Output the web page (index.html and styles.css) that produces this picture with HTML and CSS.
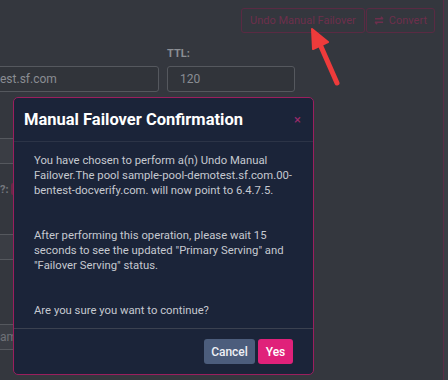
FILE: index.html
```html
<!DOCTYPE html>
<html lang="en">
<head>
    <meta charset="UTF-8">
    <meta name="viewport" content="width=device-width, initial-scale=1.0">
    <title>Manual Failover Confirmation</title>
    <link rel="stylesheet" href="styles.css">
</head>
<body>
    <div class="page">
        <div class="toolbar">
            <button class="btn-outline">Undo Manual Failover</button>
            <button class="btn-outline">
                <svg class="swap-icon" viewBox="0 0 12 10" width="11" height="9">
                    <path d="M1 3h9M7.5 0.8L10 3M1 7h9M3.5 9.2L1 7" fill="none" stroke="currentColor" stroke-width="1.6"/>
                </svg>
                Convert
            </button>
        </div>

        <div class="form-row">
            <div class="form-group name-group">
                <label>&nbsp;</label>
                <div class="field">est.sf.com</div>
            </div>
            <div class="form-group ttl-group">
                <label>TTL:</label>
                <div class="field">120</div>
                <small class="help">Time to live in seconds</small>
            </div>
        </div>

        <div class="back-rows">
            <div class="field wide"></div>
            <div class="back-label">?: <span class="pin"></span></div>
            <div class="field wide"></div>
            <div class="field wide spaced">am</div>
        </div>

        <!-- annotation arrow -->
        <svg class="arrow" width="40" height="60" viewBox="0 0 40 60">
            <path d="M32 55 L14 14" stroke="#ee3b3b" stroke-width="5" stroke-linecap="round"/>
            <path d="M7 1 L23 14 L8 21 Z" fill="#ee3b3b" stroke="#ee3b3b" stroke-width="2" stroke-linejoin="round"/>
        </svg>

        <div class="modal">
            <div class="modal-header">
                <h2>Manual Failover Confirmation</h2>
                <span class="close">&times;</span>
            </div>
            <div class="modal-body">
                <p>You have chosen to perform a(n) Undo Manual Failover.The pool sample-pool-demotest.sf.com.00-bentest-docverify.com. will now point to 6.4.7.5.</p>
                <p>After performing this operation, please wait 15 seconds to see the updated "Primary Serving" and "Failover Serving" status.</p>
                <p>Are you sure you want to continue?</p>
            </div>
            <div class="modal-footer">
                <button class="btn btn-cancel">Cancel</button>
                <button class="btn btn-yes">Yes</button>
            </div>
        </div>
    </div>
</body>
</html>
```

FILE: styles.css
```css
* {
    margin: 0;
    padding: 0;
    box-sizing: border-box;
    font-family: Roboto, 'Inter', "Noto Sans", sans-serif;
}

body {
    background-color: #393c43;
    width: 448px;
    height: 380px;
    overflow: hidden;
}

.page {
    position: relative;
    width: 444px;
    height: 380px;
    background-color: #34373e;
    border-right: 1px solid #5c2a44;
    overflow: hidden;
}

.toolbar {
    display: flex;
    justify-content: flex-end;
    gap: 1px;
    padding: 8px 8px 0 0;
}

.btn-outline {
    height: 25px;
    padding: 0 7px;
    background: transparent;
    border: 1px solid #5a2a43;
    border-radius: 3px;
    color: #6d2f4c;
    font-size: 11px;
    display: flex;
    align-items: center;
    gap: 4px;
}

.btn-outline:first-child {
    padding: 0 8px;
}

.swap-icon {
    display: block;
}

.form-row {
    display: grid;
    grid-template-columns: 172px 128px;
    gap: 8px;
    margin: 14px 0 0 -13px;
}

label {
    display: block;
    font-size: 11px;
    font-weight: 700;
    color: #8b8e94;
    height: 14px;
    margin-bottom: 5px;
}

.field {
    height: 26px;
    border: 1px solid #55585e;
    border-radius: 3px;
    background-color: #31343a;
    color: #8a8d93;
    font-size: 12px;
    line-height: 24px;
    padding: 0 8px 0 12px;
}

.name-group .field {
    text-align: right;
    padding-right: 124px;
}

.help {
    display: block;
    font-size: 10.5px;
    color: #55585e;
    margin-top: 3px;
}

.back-rows {
    display: flex;
    flex-direction: column;
    margin: 30px 0 0 -8px;
    width: 300px;
}

.back-rows .field {
    height: 26px;
    border-radius: 0;
    border-left: none;
    background-color: #3a3d44;
}

.back-label {
    height: 70px;
    padding-top: 19px;
    padding-left: 8px;
    font-size: 11px;
    font-weight: 700;
    color: #75787e;
    display: flex;
    gap: 2px;
}

.pin {
    display: inline-block;
    width: 4px;
    height: 12px;
    border-radius: 2px;
    background-color: #6a2a48;
}

.back-rows .spaced {
    margin-top: 64px;
    padding-left: 8px;
    color: #6f7278;
}

.arrow {
    position: absolute;
    left: 305px;
    top: 28px;
}

.modal {
    position: absolute;
    left: 13px;
    top: 97px;
    width: 301px;
    height: 278px;
    background-color: #1b2439;
    border: 1px solid #9b1f5e;
    border-radius: 5px;
    display: flex;
    flex-direction: column;
    overflow: hidden;
}

.modal-header {
    flex-shrink: 0;
    height: 44px;
    display: flex;
    align-items: center;
    justify-content: space-between;
    padding: 0 12px 0 10px;
    border-bottom: 1px solid #2c3447;
}

.modal-header h2 {
    font-size: 16.5px;
    font-weight: 700;
    color: #ffffff;
}

.close {
    color: #9b2a6a;
    font-size: 13px;
    line-height: 1;
}

.modal-body {
    flex: 1;
    min-height: 0;
    padding: 11px 20px 0 20px;
    color: #c6c9d0;
    font-size: 11.3px;
    line-height: 15px;
    border-bottom: 1px solid #3b4150;
}

.modal-body p {
    margin-bottom: 30px;
}

.modal-body p:last-child {
    margin-bottom: 0;
}

.modal-footer {
    flex-shrink: 0;
    height: 45px;
    display: flex;
    justify-content: flex-end;
    align-items: center;
    gap: 3px;
    padding-right: 20px;
}

.btn {
    height: 25px;
    border: none;
    border-radius: 3px;
    font-size: 12px;
    font-weight: 500;
    color: #ffffff;
}

.btn-cancel {
    background-color: #4c5d7c;
    color: #eef0f5;
    width: 51px;
}

.btn-yes {
    background-color: #e0217a;
    width: 35px;
}
```
